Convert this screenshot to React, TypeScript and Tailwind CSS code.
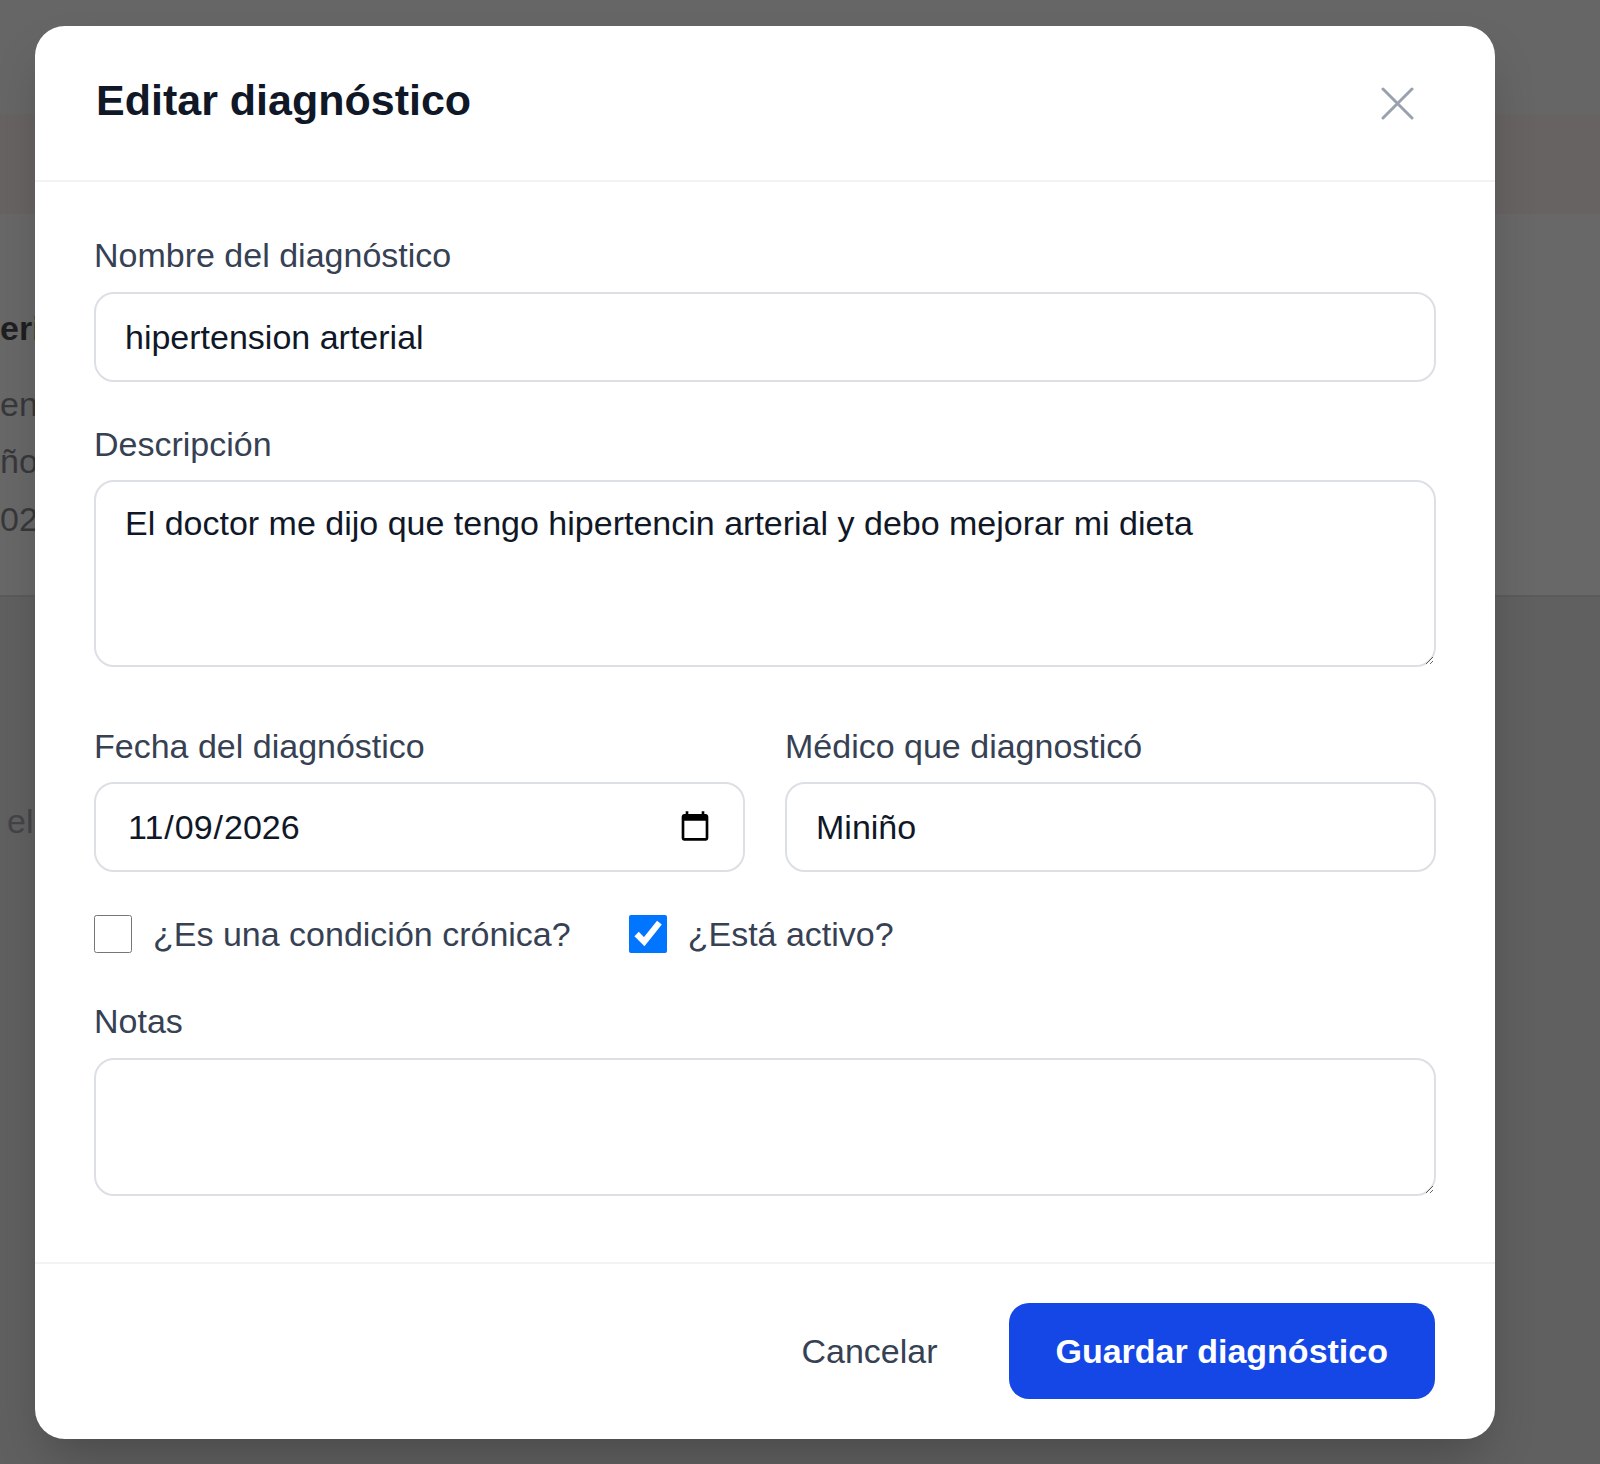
import { useState } from 'react';

function CloseIcon() {
  return (
    <svg width="33" height="33" viewBox="0 0 33 33" fill="none" className="text-gray-400">
      <path d="M2 2L31 31M31 2L2 31" stroke="currentColor" strokeWidth="3" strokeLinecap="round" />
    </svg>
  );
}

const inputClass =
  'block w-full h-[90px] rounded-[20px] border-2 border-[#dcdfe4] bg-white px-[29px] text-[34px] text-gray-900 outline-none';
const areaClass =
  'block w-full rounded-[20px] border-2 border-[#dcdfe4] bg-white px-[29px] py-[16px] text-[34px] leading-[51px] text-gray-900 outline-none';
const labelClass = 'block text-[34px] leading-[48px] text-[#364153]';

export default function App() {
  const [chronic, setChronic] = useState(false);
  const [active, setActive] = useState(true);

  return (
    <div className="relative flex h-[1464px] flex-col overflow-hidden bg-[#666666] font-['Liberation_Sans',Arial,sans-serif]">
      {/* page behind the dimmed overlay */}
      <div className="h-[114px] shrink-0" />
      <div className="h-[100px] shrink-0 bg-[#686363]" />
      <div className="h-[383px] shrink-0 border-b-2 border-[#5b5b5b] bg-[#686868] pt-[90px]">
        <p className="text-[34px] font-bold leading-[48px] text-[#1f1f22]">erial</p>
        <p className="mt-[24px] text-[34px] leading-[57px] text-[#38383c]">engo</p>
        <p className="text-[34px] leading-[57px] text-[#38383c]">ñoz</p>
        <p className="text-[34px] leading-[58px] text-[#38383c]">026</p>
      </div>
      <div className="flex-1 bg-[#606060] pt-[200px]">
        <p className="ml-[7px] text-[34px] leading-[48px] text-[#444448]">el</p>
      </div>

      {/* modal */}
      <div className="absolute left-[35px] top-[26px] w-[1460px] rounded-[30px] bg-white shadow-2xl">
        <div className="flex h-[156px] items-center justify-between border-b-2 border-[#f2f3f5] pl-[61px] pr-[81px]">
          <h2 className="-mt-[6px] text-[43px] font-bold leading-none text-[#101828]">Editar diagnóstico</h2>
          <button type="button" className="flex">
            <CloseIcon />
          </button>
        </div>

        <div className="px-[59px] pt-[49px] pb-[66px]">
          <label className={`${labelClass} mb-[13px]`}>Nombre del diagnóstico</label>
          <input type="text" defaultValue="hipertension arterial" className={inputClass} />

          <label className={`${labelClass} mt-[38px] mb-[12px]`}>Descripción</label>
          <textarea
            defaultValue="El doctor me dijo que tengo hipertencin arterial y debo mejorar mi dieta"
            className={`${areaClass} h-[187px]`}
          />

          <div className="mt-[55px] grid grid-cols-2 gap-x-[40px]">
            <div>
              <label className={`${labelClass} mb-[12px]`}>Fecha del diagnóstico</label>
              <input type="date" defaultValue="2026-11-09" className={`${inputClass} pl-[31px]`} />
            </div>
            <div>
              <label className={`${labelClass} mb-[12px]`}>Médico que diagnosticó</label>
              <input type="text" defaultValue="Miniño" className={inputClass} />
            </div>
          </div>

          <div className="mt-[43px] flex items-center gap-[58px]">
            <label className="flex items-center gap-[21px] text-[34px] leading-[38px] text-[#364153]">
              <input
                type="checkbox"
                checked={chronic}
                onChange={(e) => setChronic(e.target.checked)}
                className="m-0 h-[38px] w-[38px]"
              />
              ¿Es una condición crónica?
            </label>
            <label className="flex items-center gap-[21px] text-[34px] leading-[38px] text-[#364153]">
              <input
                type="checkbox"
                checked={active}
                onChange={(e) => setActive(e.target.checked)}
                className="m-0 h-[38px] w-[38px]"
              />
              ¿Está activo?
            </label>
          </div>

          <label className={`${labelClass} mt-[44px] mb-[13px]`}>Notas</label>
          <textarea className={`${areaClass} h-[138px]`} />
        </div>

        <div className="flex items-center justify-end gap-[24px] border-t-2 border-[#f2f3f5] px-[60px] pt-[39px] pb-[40px]">
          <button type="button" className="h-[96px] px-[47px] text-[34px] text-[#364153]">
            Cancelar
          </button>
          <button type="button" className="h-[96px] rounded-[20px] bg-blue-700 px-[47px] text-[34px] font-bold text-white">
            Guardar diagnóstico
          </button>
        </div>
      </div>
    </div>
  );
}
